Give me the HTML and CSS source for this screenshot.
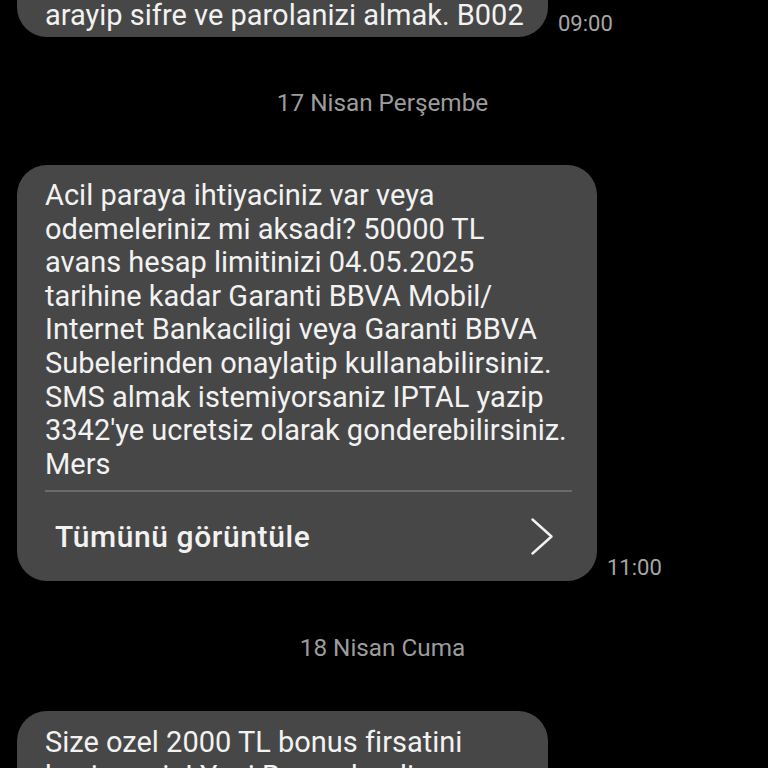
FILE: index.html
```html
<!DOCTYPE html>
<html lang="tr">
<head>
<meta charset="utf-8">
<link rel="stylesheet" href="styles.css">
</head>
<body>
<main class="chat">
  <div class="row row-first">
    <div class="bubble bubble-short bubble-cut">
      <p class="msg">arayip sifre ve parolanizi almak. B002</p>
    </div>
    <span class="time">09:00</span>
  </div>

  <div class="date">17 Nisan Perşembe</div>

  <div class="row">
    <div class="bubble bubble-wide">
      <p class="msg">Acil paraya ihtiyaciniz var veya<br>odemeleriniz mi aksadi? 50000 TL<br>avans hesap limitinizi 04.05.2025<br>tarihine kadar Garanti BBVA Mobil/<br>Internet Bankaciligi veya Garanti BBVA<br>Subelerinden onaylatip kullanabilirsiniz.<br>SMS almak istemiyorsaniz IPTAL yazip<br>3342'ye ucretsiz olarak gonderebilirsiniz.<br>Mers</p>
      <div class="divider"></div>
      <div class="more">
        <span class="more-label">Tümünü görüntüle</span>
        <svg class="chev" width="22" height="37" viewBox="0 0 22 37" aria-hidden="true">
          <polyline points="1.5,1.5 20.5,18.5 1.5,35.5" fill="none" stroke="#f2f2f2" stroke-width="2.4" stroke-linecap="round" stroke-linejoin="round"/>
        </svg>
      </div>
    </div>
    <span class="time">11:00</span>
  </div>

  <div class="date date-second">18 Nisan Cuma</div>

  <div class="row">
    <div class="bubble bubble-short">
      <p class="msg">Size ozel 2000 TL bonus firsatini<br>kacirmayin! Yeni Bonus kredi<br>kampanyasi ile hemen basvurun.</p>
    </div>
    <span class="time">12:00</span>
  </div>
</main>
</body>
</html>
```
FILE: styles.css
```css
html, body {
  margin: 0;
  padding: 0;
  background: #000;
  height: 768px;
  overflow: hidden;
}
body {
  font-family: Roboto, "Noto Sans", sans-serif;
  color: #f2f2f2;
}
.chat {
  padding-left: 17px;
  display: flex;
  flex-direction: column;
}
.row {
  display: flex;
  align-items: flex-end;
  gap: 10px;
}
.row-first {
  margin-top: -41px;
}
.bubble {
  background: #474747;
  border-radius: 30px;
  padding: 14.5px 25px 0 28px;
  box-sizing: border-box;
}
.bubble-short { width: 531px; padding-bottom: 11px; }
.bubble-wide { width: 580px; }
.bubble-cut { padding-top: 40px; padding-bottom: 4px; }
.msg {
  margin: 0;
  font-size: 29px;
  line-height: 33.6px;
  white-space: nowrap;
}
.divider {
  margin-top: 9px;
  height: 2px;
  background: #6a6a6a;
}
.more {
  height: 89px;
  display: flex;
  align-items: center;
  justify-content: space-between;
  padding: 0 19px 0 10px;
}
.more-label {
  font-size: 30px;
  font-weight: 500;
  line-height: 34px;
  letter-spacing: 0.6px;
}
.chev { display: block; }
.time {
  font-size: 22px;
  line-height: 22px;
  color: #a6a6a6;
  margin-bottom: 2px;
}
.date {
  text-align: center;
  font-size: 24.3px;
  line-height: 34px;
  color: #9c9c9c;
  padding: 49px 0 45px;
  margin-right: 20px;
}
.date-second {
  padding-top: 50px;
  padding-bottom: 46px;
}
```
